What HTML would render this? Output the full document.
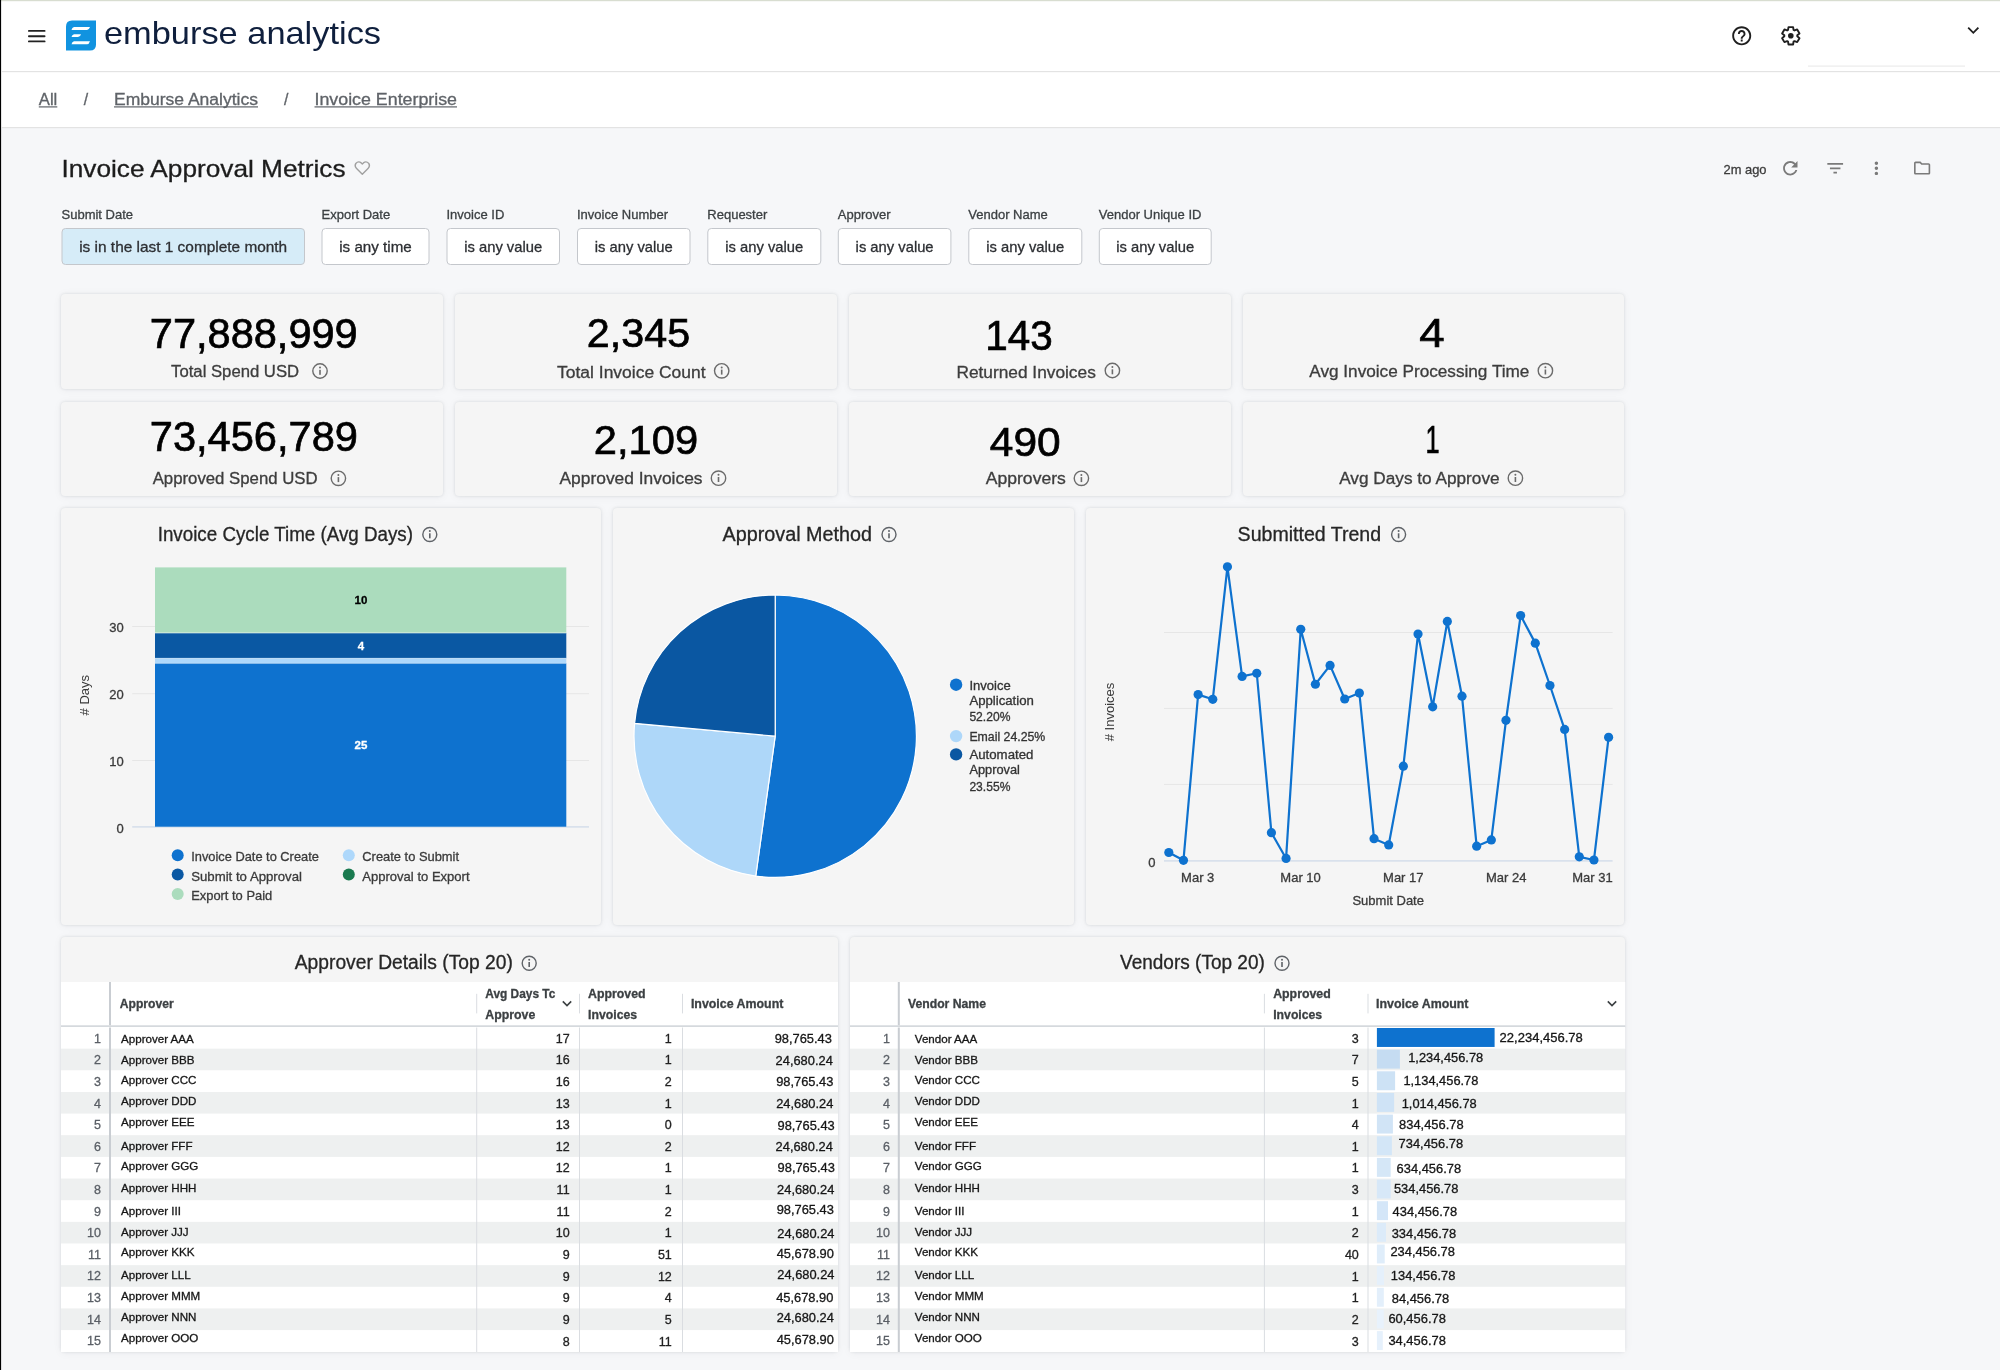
<!DOCTYPE html>
<html><head><meta charset="utf-8">
<style>
html,body{margin:0;padding:0;width:2000px;height:1370px;overflow:hidden;background:#f6f7f9;}
body{position:relative;font-family:"Liberation Sans", sans-serif;}
.hdr{position:absolute;left:0;top:0;width:2000px;height:127px;background:#ffffff;}
.card{position:absolute;box-shadow:0 0 3px rgba(20,30,45,0.12),0 1px 10px rgba(30,40,60,0.05);}
svg{position:absolute;left:0;top:0;will-change:transform;-webkit-font-smoothing:antialiased;}
svg text{font-family:"Liberation Sans", sans-serif;}
</style></head><body>
<div class="hdr"></div>
<div class="card" style="left:61px;top:294px;width:381.5px;height:95.19999999999999px;background:#f5f5f5;border-radius:4px"></div><div class="card" style="left:455px;top:294px;width:381.5px;height:95.19999999999999px;background:#f5f5f5;border-radius:4px"></div><div class="card" style="left:849px;top:294px;width:381.5px;height:95.19999999999999px;background:#f5f5f5;border-radius:4px"></div><div class="card" style="left:1243px;top:294px;width:381.29999999999995px;height:95.19999999999999px;background:#f5f5f5;border-radius:4px"></div><div class="card" style="left:61px;top:401.8px;width:381.5px;height:94.0px;background:#f5f5f5;border-radius:4px"></div><div class="card" style="left:455px;top:401.8px;width:381.5px;height:94.0px;background:#f5f5f5;border-radius:4px"></div><div class="card" style="left:849px;top:401.8px;width:381.5px;height:94.0px;background:#f5f5f5;border-radius:4px"></div><div class="card" style="left:1243px;top:401.8px;width:381.29999999999995px;height:94.0px;background:#f5f5f5;border-radius:4px"></div><div class="card" style="left:61px;top:508px;width:540px;height:417px;background:#f5f5f5;border-radius:4px"></div><div class="card" style="left:613px;top:508px;width:460.5999999999999px;height:417px;background:#f5f5f5;border-radius:4px"></div><div class="card" style="left:1086px;top:508px;width:538.3px;height:417px;background:#f5f5f5;border-radius:4px"></div><div class="card" style="left:61px;top:937px;width:777px;height:415.4000000000001px;background:#f5f5f5;border-radius:4px"></div><div class="card" style="left:850px;top:937px;width:775.2px;height:415.4000000000001px;background:#f5f5f5;border-radius:4px"></div>
<svg width="2000" height="1370" viewBox="0 0 2000 1370">
<rect x="0.00" y="0.00" width="2000.00" height="1.20" fill="#d8ddd0"/>
<rect x="0.00" y="0.00" width="1.10" height="1370.00" fill="#000"/>
<rect x="1.50" y="71.00" width="1998.50" height="1.20" fill="#e3e3e3"/>
<rect x="1.50" y="127.00" width="1998.50" height="1.20" fill="#e3e3e3"/>
<rect x="28" y="29.9" width="17.5" height="1.9" rx="0.9" fill="#222"/>
<rect x="28" y="35.3" width="17.5" height="1.9" rx="0.9" fill="#222"/>
<rect x="28" y="40.4" width="17.5" height="1.9" rx="0.9" fill="#222"/>
<path d="M72,20.5 H96 V44.5 Q96,50.5 90,50.5 H66 V26.5 Q66,20.5 72,20.5 Z" fill="#1193e0"/>
<path d="M74,27 L90,27 Q89,30 87,30 L71.5,30 Q72,27.5 74,27 Z" fill="#fff"/>
<path d="M74,34.2 L81,34.2 Q80.3,37 78,37 L71.5,37 Q72,34.6 74,34.2 Z" fill="#fff"/>
<path d="M74,41.2 L90,41.2 Q89,44.2 87,44.2 L71.5,44.2 Q72,41.6 74,41.2 Z" fill="#fff"/>
<text x="104.0" y="44.0" font-size="32" fill="#0f1f3d" text-anchor="start" textLength="277.0" lengthAdjust="spacingAndGlyphs">emburse analytics</text>
<path transform="translate(1730.3,24.4) scale(0.95)" d="M11 18h2v-2h-2v2zm1-16C6.48 2 2 6.48 2 12s4.48 10 10 10 10-4.48 10-10S17.52 2 12 2zm0 18c-4.41 0-8-3.59-8-8s3.59-8 8-8 8 3.59 8 8-3.59 8-8 8zm0-14c-2.21 0-4 1.790-4 4h2c0-1.1.9-2 2-2s2 .9 2 2c0 2-3 1.75-3 5h2c0-2.25 3-2.5 3-5 0-2.21-1.79-4-4-4z" fill="#1f1f1f"/>
<path d="M1788.04,29.91 L1788.50,27.10 L1793.10,27.10 L1793.56,29.91 L1794.52,30.47 L1797.18,29.46 L1799.49,33.44 L1797.28,35.24 L1797.28,36.36 L1799.49,38.16 L1797.18,42.14 L1794.52,41.13 L1793.56,41.69 L1793.10,44.50 L1788.50,44.50 L1788.04,41.69 L1787.08,41.13 L1784.42,42.14 L1782.11,38.16 L1784.32,36.36 L1784.32,35.24 L1782.11,33.44 L1784.42,29.46 L1787.08,30.47 Z" fill="none" stroke="#1f1f1f" stroke-width="1.9" stroke-linejoin="round"/>
<circle cx="1790.8" cy="35.8" r="2.8" fill="#1f1f1f"/>
<path d="M1968.2,27.6 L1973.3,32.8 L1978.4,27.6" fill="none" stroke="#1f1f1f" stroke-width="1.8"/>
<rect x="1808.00" y="65.50" width="157.00" height="1.20" fill="#ececec"/>
<text x="38.8" y="105.0" font-size="15.8" fill="#5f6368" stroke="#5f6368" stroke-width="0.3" text-anchor="start" textLength="18.5" lengthAdjust="spacingAndGlyphs">All</text>
<rect x="38.80" y="106.30" width="18.50" height="1.20" fill="#5f6368"/>
<text x="83.8" y="105.0" font-size="15.8" fill="#5f6368" stroke="#5f6368" stroke-width="0.3" text-anchor="start">/</text>
<text x="114.0" y="105.0" font-size="15.8" fill="#5f6368" stroke="#5f6368" stroke-width="0.3" text-anchor="start" textLength="144.0" lengthAdjust="spacingAndGlyphs">Emburse Analytics</text>
<rect x="114.00" y="106.30" width="144.00" height="1.20" fill="#5f6368"/>
<text x="284.0" y="105.0" font-size="15.8" fill="#5f6368" stroke="#5f6368" stroke-width="0.3" text-anchor="start">/</text>
<text x="314.5" y="105.0" font-size="15.8" fill="#5f6368" stroke="#5f6368" stroke-width="0.3" text-anchor="start" textLength="142.5" lengthAdjust="spacingAndGlyphs">Invoice Enterprise</text>
<rect x="314.50" y="106.30" width="142.50" height="1.20" fill="#5f6368"/>
<text x="61.5" y="177.0" font-size="24" fill="#1c1c1c" stroke="#1c1c1c" stroke-width="0.3" text-anchor="start" textLength="284.0" lengthAdjust="spacingAndGlyphs">Invoice Approval Metrics</text>
<path d="M362.3,174.3 L356.6,168.6 Q354.2,166 355.8,163.4 Q358.4,160.6 361.2,162.9 L362.3,163.9 L363.4,162.9 Q366.2,160.6 368.8,163.4 Q370.4,166 368,168.6 Z" fill="none" stroke="#a0a0a0" stroke-width="1.4" stroke-linejoin="round"/>
<text x="1723.5" y="173.6" font-size="13" fill="#3c3c3c" stroke="#3c3c3c" stroke-width="0.3" text-anchor="start" textLength="43.0" lengthAdjust="spacingAndGlyphs">2m ago</text>
<path transform="translate(1779.5,157.5) scale(0.9)" d="M17.65 6.35C16.2 4.9 14.21 4 12 4c-4.42 0-7.99 3.58-7.99 8s3.57 8 7.99 8c3.73 0 6.84-2.55 7.73-6h-2.08c-.82 2.33-3.04 4-5.65 4-3.31 0-6-2.69-6-6s2.69-6 6-6c1.66 0 3.14.69 4.22 1.78L13 11h7V4l-2.35 2.35z" fill="#7a7a7a"/>
<path transform="translate(1824.7,157.8) scale(0.875)" d="M10 18h4v-2h-4v2zM3 6v2h18V6H3zm3 7h12v-2H6v2z" fill="#7a7a7a"/>
<path transform="translate(1866.2,158.1) scale(0.85)" d="M12 8c1.1 0 2-.9 2-2s-.9-2-2-2-2 .9-2 2 .9 2 2 2zm0 2c-1.1 0-2 .9-2 2s.9 2 2 2 2-.9 2-2-.9-2-2-2zm0 6c-1.1 0-2 .9-2 2s.9 2 2 2 2-.9 2-2-.9-2-2-2z" fill="#7a7a7a"/>
<path transform="translate(1912.4,158.3) scale(0.81)" d="M9.17 6l2 2H20v10H4V6h5.17M10 4H4c-1.1 0-1.99.9-1.99 2L2 18c0 1.1.9 2 2 2h16c1.1 0 2-.9 2-2V8c0-1.1-.9-2-2-2h-8l-2-2z" fill="#7a7a7a"/>
<text x="61.5" y="219.0" font-size="13" fill="#3c4043" stroke="#3c4043" stroke-width="0.3" text-anchor="start">Submit Date</text>
<rect x="62.0" y="228.5" width="242.5" height="36" rx="3.5" fill="#d6ecf8" stroke="#c4c7cc" stroke-width="1"/>
<text x="183.2" y="251.5" font-size="15" fill="#2d2f33" stroke="#2d2f33" stroke-width="0.3" text-anchor="middle" textLength="208.0" lengthAdjust="spacingAndGlyphs">is in the last 1 complete month</text>
<text x="321.5" y="219.0" font-size="13" fill="#3c4043" stroke="#3c4043" stroke-width="0.3" text-anchor="start">Export Date</text>
<rect x="322.0" y="228.5" width="107.0" height="36" rx="3.5" fill="#ffffff" stroke="#c4c7cc" stroke-width="1"/>
<text x="375.5" y="251.5" font-size="15" fill="#2d2f33" stroke="#2d2f33" stroke-width="0.3" text-anchor="middle" textLength="72.5" lengthAdjust="spacingAndGlyphs">is any time</text>
<text x="446.5" y="219.0" font-size="13" fill="#3c4043" stroke="#3c4043" stroke-width="0.3" text-anchor="start">Invoice ID</text>
<rect x="447.0" y="228.5" width="112.5" height="36" rx="3.5" fill="#ffffff" stroke="#c4c7cc" stroke-width="1"/>
<text x="503.2" y="251.5" font-size="15" fill="#2d2f33" stroke="#2d2f33" stroke-width="0.3" text-anchor="middle" textLength="78.0" lengthAdjust="spacingAndGlyphs">is any value</text>
<text x="577.0" y="219.0" font-size="13" fill="#3c4043" stroke="#3c4043" stroke-width="0.3" text-anchor="start">Invoice Number</text>
<rect x="577.5" y="228.5" width="112.5" height="36" rx="3.5" fill="#ffffff" stroke="#c4c7cc" stroke-width="1"/>
<text x="633.8" y="251.5" font-size="15" fill="#2d2f33" stroke="#2d2f33" stroke-width="0.3" text-anchor="middle" textLength="78.0" lengthAdjust="spacingAndGlyphs">is any value</text>
<text x="707.3" y="219.0" font-size="13" fill="#3c4043" stroke="#3c4043" stroke-width="0.3" text-anchor="start">Requester</text>
<rect x="707.8" y="228.5" width="113.0" height="36" rx="3.5" fill="#ffffff" stroke="#c4c7cc" stroke-width="1"/>
<text x="764.3" y="251.5" font-size="15" fill="#2d2f33" stroke="#2d2f33" stroke-width="0.3" text-anchor="middle" textLength="78.0" lengthAdjust="spacingAndGlyphs">is any value</text>
<text x="837.8" y="219.0" font-size="13" fill="#3c4043" stroke="#3c4043" stroke-width="0.3" text-anchor="start">Approver</text>
<rect x="838.3" y="228.5" width="112.6" height="36" rx="3.5" fill="#ffffff" stroke="#c4c7cc" stroke-width="1"/>
<text x="894.6" y="251.5" font-size="15" fill="#2d2f33" stroke="#2d2f33" stroke-width="0.3" text-anchor="middle" textLength="78.0" lengthAdjust="spacingAndGlyphs">is any value</text>
<text x="968.3" y="219.0" font-size="13" fill="#3c4043" stroke="#3c4043" stroke-width="0.3" text-anchor="start">Vendor Name</text>
<rect x="968.8" y="228.5" width="113.0" height="36" rx="3.5" fill="#ffffff" stroke="#c4c7cc" stroke-width="1"/>
<text x="1025.3" y="251.5" font-size="15" fill="#2d2f33" stroke="#2d2f33" stroke-width="0.3" text-anchor="middle" textLength="78.0" lengthAdjust="spacingAndGlyphs">is any value</text>
<text x="1098.8" y="219.0" font-size="13" fill="#3c4043" stroke="#3c4043" stroke-width="0.3" text-anchor="start">Vendor Unique ID</text>
<rect x="1099.3" y="228.5" width="111.9" height="36" rx="3.5" fill="#ffffff" stroke="#c4c7cc" stroke-width="1"/>
<text x="1155.2" y="251.5" font-size="15" fill="#2d2f33" stroke="#2d2f33" stroke-width="0.3" text-anchor="middle" textLength="78.0" lengthAdjust="spacingAndGlyphs">is any value</text>
<text x="149.8" y="348.4" font-size="42.0" fill="#000000" stroke="#000000" stroke-width="0.7" text-anchor="start" textLength="207.9" lengthAdjust="spacingAndGlyphs">77,888,999</text>
<text x="171.1" y="377.4" font-size="16" fill="#3d3d3d" stroke="#3d3d3d" stroke-width="0.3" text-anchor="start" textLength="128.0" lengthAdjust="spacingAndGlyphs">Total Spend USD</text>
<circle cx="320.0" cy="371.0" r="7.2" fill="none" stroke="#6b6b6b" stroke-width="1.4"/>
<rect x="319.2" y="369.8" width="1.6" height="5" fill="#6b6b6b"/>
<circle cx="320.0" cy="367.6" r="1" fill="#6b6b6b"/>
<text x="586.8" y="346.5" font-size="41.0" fill="#000000" stroke="#000000" stroke-width="0.7" text-anchor="start" textLength="103.4" lengthAdjust="spacingAndGlyphs">2,345</text>
<text x="557.1" y="377.6" font-size="16" fill="#3d3d3d" stroke="#3d3d3d" stroke-width="0.3" text-anchor="start" textLength="148.4" lengthAdjust="spacingAndGlyphs">Total Invoice Count</text>
<circle cx="721.7" cy="370.8" r="7.2" fill="none" stroke="#6b6b6b" stroke-width="1.4"/>
<rect x="720.9" y="369.6" width="1.6" height="5" fill="#6b6b6b"/>
<circle cx="721.7" cy="367.4" r="1" fill="#6b6b6b"/>
<text x="985.3" y="349.8" font-size="42.1" fill="#000000" stroke="#000000" stroke-width="0.7" text-anchor="start" textLength="67.5" lengthAdjust="spacingAndGlyphs">143</text>
<text x="956.4" y="377.6" font-size="16" fill="#3d3d3d" stroke="#3d3d3d" stroke-width="0.3" text-anchor="start" textLength="139.4" lengthAdjust="spacingAndGlyphs">Returned Invoices</text>
<circle cx="1112.4" cy="370.5" r="7.2" fill="none" stroke="#6b6b6b" stroke-width="1.4"/>
<rect x="1111.6" y="369.3" width="1.6" height="5" fill="#6b6b6b"/>
<circle cx="1112.4" cy="367.1" r="1" fill="#6b6b6b"/>
<text x="1419.2" y="346.6" font-size="41.5" fill="#000000" stroke="#000000" stroke-width="0.7" text-anchor="start" textLength="25.4" lengthAdjust="spacingAndGlyphs">4</text>
<text x="1309.3" y="377.2" font-size="16" fill="#3d3d3d" stroke="#3d3d3d" stroke-width="0.3" text-anchor="start" textLength="220.1" lengthAdjust="spacingAndGlyphs">Avg Invoice Processing Time</text>
<circle cx="1545.4" cy="370.7" r="7.2" fill="none" stroke="#6b6b6b" stroke-width="1.4"/>
<rect x="1544.6" y="369.5" width="1.6" height="5" fill="#6b6b6b"/>
<circle cx="1545.4" cy="367.3" r="1" fill="#6b6b6b"/>
<text x="149.8" y="450.7" font-size="42.0" fill="#000000" stroke="#000000" stroke-width="0.7" text-anchor="start" textLength="208.1" lengthAdjust="spacingAndGlyphs">73,456,789</text>
<text x="152.7" y="483.8" font-size="16" fill="#3d3d3d" stroke="#3d3d3d" stroke-width="0.3" text-anchor="start" textLength="164.9" lengthAdjust="spacingAndGlyphs">Approved Spend USD</text>
<circle cx="338.4" cy="478.3" r="7.2" fill="none" stroke="#6b6b6b" stroke-width="1.4"/>
<rect x="337.6" y="477.1" width="1.6" height="5" fill="#6b6b6b"/>
<circle cx="338.4" cy="474.9" r="1" fill="#6b6b6b"/>
<text x="593.8" y="453.7" font-size="41.5" fill="#000000" stroke="#000000" stroke-width="0.7" text-anchor="start" textLength="104.3" lengthAdjust="spacingAndGlyphs">2,109</text>
<text x="559.5" y="484.0" font-size="16" fill="#3d3d3d" stroke="#3d3d3d" stroke-width="0.3" text-anchor="start" textLength="143.0" lengthAdjust="spacingAndGlyphs">Approved Invoices</text>
<circle cx="718.5" cy="478.2" r="7.2" fill="none" stroke="#6b6b6b" stroke-width="1.4"/>
<rect x="717.7" y="477.0" width="1.6" height="5" fill="#6b6b6b"/>
<circle cx="718.5" cy="474.8" r="1" fill="#6b6b6b"/>
<text x="989.8" y="456.3" font-size="41.0" fill="#000000" stroke="#000000" stroke-width="0.7" text-anchor="start" textLength="70.9" lengthAdjust="spacingAndGlyphs">490</text>
<text x="985.8" y="483.8" font-size="16" fill="#3d3d3d" stroke="#3d3d3d" stroke-width="0.3" text-anchor="start" textLength="80.0" lengthAdjust="spacingAndGlyphs">Approvers</text>
<circle cx="1081.4" cy="478.3" r="7.2" fill="none" stroke="#6b6b6b" stroke-width="1.4"/>
<rect x="1080.6" y="477.1" width="1.6" height="5" fill="#6b6b6b"/>
<circle cx="1081.4" cy="474.9" r="1" fill="#6b6b6b"/>
<text x="1425.6" y="453.0" font-size="39.1" fill="#000000" stroke="#000000" stroke-width="0.7" text-anchor="start" textLength="14.1" lengthAdjust="spacingAndGlyphs">1</text>
<text x="1339.2" y="483.8" font-size="16" fill="#3d3d3d" stroke="#3d3d3d" stroke-width="0.3" text-anchor="start" textLength="160.4" lengthAdjust="spacingAndGlyphs">Avg Days to Approve</text>
<circle cx="1515.4" cy="478.2" r="7.2" fill="none" stroke="#6b6b6b" stroke-width="1.4"/>
<rect x="1514.6" y="477.0" width="1.6" height="5" fill="#6b6b6b"/>
<circle cx="1515.4" cy="474.8" r="1" fill="#6b6b6b"/>
<text x="157.7" y="540.8" font-size="19.5" fill="#262626" stroke="#262626" stroke-width="0.3" text-anchor="start" textLength="255.3" lengthAdjust="spacingAndGlyphs">Invoice Cycle Time (Avg Days)</text>
<circle cx="429.8" cy="534.5" r="7" fill="none" stroke="#5f6368" stroke-width="1.4"/>
<rect x="429.0" y="533.3" width="1.6" height="5" fill="#5f6368"/>
<circle cx="429.8" cy="531.1" r="1" fill="#5f6368"/>
<rect x="132.20" y="626.00" width="456.80" height="1.00" fill="#e6e6e6"/>
<text x="123.8" y="631.8" font-size="13" fill="#3a3a3a" stroke="#3a3a3a" stroke-width="0.3" text-anchor="end">30</text>
<rect x="132.20" y="693.20" width="456.80" height="1.00" fill="#e6e6e6"/>
<text x="123.8" y="699.0" font-size="13" fill="#3a3a3a" stroke="#3a3a3a" stroke-width="0.3" text-anchor="end">20</text>
<rect x="132.20" y="760.00" width="456.80" height="1.00" fill="#e6e6e6"/>
<text x="123.8" y="765.8" font-size="13" fill="#3a3a3a" stroke="#3a3a3a" stroke-width="0.3" text-anchor="end">10</text>
<rect x="132.20" y="826.20" width="456.80" height="1.40" fill="#d3dcea"/>
<text x="123.8" y="832.7" font-size="13" fill="#3a3a3a" stroke="#3a3a3a" stroke-width="0.3" text-anchor="end">0</text>
<text transform="translate(89,695.2) rotate(-90)" x="0" y="0" font-size="13" fill="#3a3a3a" text-anchor="middle">#&#160;Days</text>
<rect x="155.00" y="567.40" width="411.30" height="65.50" fill="#abdcbd"/>
<rect x="155.00" y="633.00" width="411.30" height="25.20" fill="#0a58a3"/>
<rect x="155.00" y="658.20" width="411.30" height="5.00" fill="#aed8fb"/>
<rect x="155.00" y="663.20" width="411.30" height="163.50" fill="#0e72cf"/>
<rect x="155.00" y="632.60" width="411.30" height="0.70" fill="#e9f3ee"/>
<rect x="155.00" y="657.90" width="411.30" height="0.60" fill="#c9dff3"/>
<rect x="155.00" y="662.90" width="411.30" height="0.60" fill="#d6eafb"/>
<text x="361.0" y="604.3" font-size="11.5" fill="#000" font-weight="700" stroke="#000" stroke-width="0.3" text-anchor="middle">10</text>
<text x="361.0" y="650.1" font-size="11.5" fill="#fff" font-weight="700" stroke="#fff" stroke-width="0.3" text-anchor="middle">4</text>
<text x="361.0" y="748.5" font-size="11.5" fill="#fff" font-weight="700" stroke="#fff" stroke-width="0.3" text-anchor="middle">25</text>
<circle cx="177.7" cy="855.3" r="6" fill="#0e72cf"/>
<text x="191.2" y="861.0" font-size="13" fill="#3a3a3a" stroke="#3a3a3a" stroke-width="0.3" text-anchor="start" textLength="127.7" lengthAdjust="spacingAndGlyphs">Invoice Date to Create</text>
<circle cx="348.8" cy="855.3" r="6" fill="#aed8fb"/>
<text x="362.3" y="861.0" font-size="13" fill="#3a3a3a" stroke="#3a3a3a" stroke-width="0.3" text-anchor="start" textLength="96.7" lengthAdjust="spacingAndGlyphs">Create to Submit</text>
<circle cx="177.7" cy="874.5" r="6" fill="#0a58a3"/>
<text x="191.2" y="880.6" font-size="13" fill="#3a3a3a" stroke="#3a3a3a" stroke-width="0.3" text-anchor="start" textLength="110.8" lengthAdjust="spacingAndGlyphs">Submit to Approval</text>
<circle cx="348.8" cy="874.5" r="6" fill="#1a7a4f"/>
<text x="362.3" y="880.6" font-size="13" fill="#3a3a3a" stroke="#3a3a3a" stroke-width="0.3" text-anchor="start" textLength="107.3" lengthAdjust="spacingAndGlyphs">Approval to Export</text>
<circle cx="177.7" cy="893.9" r="6" fill="#abdcbd"/>
<text x="191.2" y="900.0" font-size="13" fill="#3a3a3a" stroke="#3a3a3a" stroke-width="0.3" text-anchor="start" textLength="81.0" lengthAdjust="spacingAndGlyphs">Export to Paid</text>
<text x="722.5" y="540.8" font-size="19.5" fill="#262626" stroke="#262626" stroke-width="0.3" text-anchor="start" textLength="149.5" lengthAdjust="spacingAndGlyphs">Approval Method</text>
<circle cx="889.0" cy="534.5" r="7" fill="none" stroke="#5f6368" stroke-width="1.4"/>
<rect x="888.2" y="533.3" width="1.6" height="5" fill="#5f6368"/>
<circle cx="889.0" cy="531.1" r="1" fill="#5f6368"/>
<path d="M775.2,736.2 L775.20,595.00 A141.2,141.2 0 1 1 755.74,876.05 Z" fill="#0e72cf" stroke="#ffffff" stroke-width="1.2" stroke-linejoin="round"/>
<path d="M775.2,736.2 L755.74,876.05 A141.2,141.2 0 0 1 634.59,723.35 Z" fill="#aed7f9" stroke="#ffffff" stroke-width="1.2" stroke-linejoin="round"/>
<path d="M775.2,736.2 L634.59,723.35 A141.2,141.2 0 0 1 775.20,595.00 Z" fill="#0a57a2" stroke="#ffffff" stroke-width="1.2" stroke-linejoin="round"/>
<circle cx="956.1" cy="684.7" r="6.2" fill="#0e72cf"/>
<text x="969.4" y="689.9" font-size="12.3" fill="#333" stroke="#333" stroke-width="0.3" text-anchor="start" textLength="41.3" lengthAdjust="spacingAndGlyphs">Invoice</text>
<text x="969.4" y="704.9" font-size="12.3" fill="#333" stroke="#333" stroke-width="0.3" text-anchor="start" textLength="64.5" lengthAdjust="spacingAndGlyphs">Application</text>
<text x="969.4" y="720.8" font-size="12.3" fill="#333" stroke="#333" stroke-width="0.3" text-anchor="start" textLength="41.0" lengthAdjust="spacingAndGlyphs">52.20%</text>
<circle cx="956.1" cy="736.1" r="6.2" fill="#aed7f9"/>
<text x="969.4" y="740.7" font-size="12.3" fill="#333" stroke="#333" stroke-width="0.3" text-anchor="start" textLength="75.9" lengthAdjust="spacingAndGlyphs">Email 24.25%</text>
<circle cx="956.1" cy="754.4" r="6.2" fill="#0a57a2"/>
<text x="969.4" y="759.4" font-size="12.3" fill="#333" stroke="#333" stroke-width="0.3" text-anchor="start" textLength="64.0" lengthAdjust="spacingAndGlyphs">Automated</text>
<text x="969.4" y="774.4" font-size="12.3" fill="#333" stroke="#333" stroke-width="0.3" text-anchor="start" textLength="50.5" lengthAdjust="spacingAndGlyphs">Approval</text>
<text x="969.4" y="790.7" font-size="12.3" fill="#333" stroke="#333" stroke-width="0.3" text-anchor="start" textLength="41.0" lengthAdjust="spacingAndGlyphs">23.55%</text>
<text x="1237.6" y="540.8" font-size="19.5" fill="#262626" stroke="#262626" stroke-width="0.3" text-anchor="start" textLength="143.5" lengthAdjust="spacingAndGlyphs">Submitted Trend</text>
<circle cx="1398.6" cy="534.5" r="7" fill="none" stroke="#5f6368" stroke-width="1.4"/>
<rect x="1397.8" y="533.3" width="1.6" height="5" fill="#5f6368"/>
<circle cx="1398.6" cy="531.1" r="1" fill="#5f6368"/>
<rect x="1164.00" y="632.00" width="448.60" height="1.00" fill="#e6e6e6"/>
<rect x="1164.00" y="707.90" width="448.60" height="1.00" fill="#e6e6e6"/>
<rect x="1164.00" y="783.90" width="448.60" height="1.00" fill="#e6e6e6"/>
<rect x="1164.00" y="860.20" width="448.60" height="1.40" fill="#d3dcea"/>
<text x="1155.5" y="866.5" font-size="13" fill="#3a3a3a" stroke="#3a3a3a" stroke-width="0.3" text-anchor="end">0</text>
<text transform="translate(1114,712) rotate(-90)" x="0" y="0" font-size="13" fill="#3a3a3a" text-anchor="middle">#&#160;Invoices</text>
<text x="1197.7" y="882.0" font-size="13" fill="#3a3a3a" stroke="#3a3a3a" stroke-width="0.3" text-anchor="middle">Mar 3</text>
<text x="1300.6" y="882.0" font-size="13" fill="#3a3a3a" stroke="#3a3a3a" stroke-width="0.3" text-anchor="middle">Mar 10</text>
<text x="1403.3" y="882.0" font-size="13" fill="#3a3a3a" stroke="#3a3a3a" stroke-width="0.3" text-anchor="middle">Mar 17</text>
<text x="1506.2" y="882.0" font-size="13" fill="#3a3a3a" stroke="#3a3a3a" stroke-width="0.3" text-anchor="middle">Mar 24</text>
<text x="1592.5" y="882.0" font-size="13" fill="#3a3a3a" stroke="#3a3a3a" stroke-width="0.3" text-anchor="middle">Mar 31</text>
<text x="1388.2" y="905.0" font-size="13" fill="#3a3a3a" stroke="#3a3a3a" stroke-width="0.3" text-anchor="middle">Submit Date</text>
<path d="M1168.80,852.48 L1183.46,860.33 L1198.12,694.60 L1212.78,699.31 L1227.44,566.85 L1242.10,676.40 L1256.76,673.26 L1271.42,832.71 L1286.08,858.44 L1300.74,629.32 L1315.40,684.24 L1330.06,665.41 L1344.72,699.00 L1359.38,693.03 L1374.04,838.67 L1388.70,844.95 L1403.36,766.16 L1418.02,634.02 L1432.68,706.84 L1447.34,621.47 L1462.00,696.17 L1476.66,846.20 L1491.32,839.92 L1505.98,720.34 L1520.64,615.51 L1535.30,643.13 L1549.96,685.50 L1564.62,729.44 L1579.28,856.87 L1593.94,860.01 L1608.60,737.29" fill="none" stroke="#0e72cf" stroke-width="2.2" stroke-linejoin="round"/>
<circle cx="1168.80" cy="852.48" r="4.6" fill="#0e72cf"/>
<circle cx="1183.46" cy="860.33" r="4.6" fill="#0e72cf"/>
<circle cx="1198.12" cy="694.60" r="4.6" fill="#0e72cf"/>
<circle cx="1212.78" cy="699.31" r="4.6" fill="#0e72cf"/>
<circle cx="1227.44" cy="566.85" r="4.6" fill="#0e72cf"/>
<circle cx="1242.10" cy="676.40" r="4.6" fill="#0e72cf"/>
<circle cx="1256.76" cy="673.26" r="4.6" fill="#0e72cf"/>
<circle cx="1271.42" cy="832.71" r="4.6" fill="#0e72cf"/>
<circle cx="1286.08" cy="858.44" r="4.6" fill="#0e72cf"/>
<circle cx="1300.74" cy="629.32" r="4.6" fill="#0e72cf"/>
<circle cx="1315.40" cy="684.24" r="4.6" fill="#0e72cf"/>
<circle cx="1330.06" cy="665.41" r="4.6" fill="#0e72cf"/>
<circle cx="1344.72" cy="699.00" r="4.6" fill="#0e72cf"/>
<circle cx="1359.38" cy="693.03" r="4.6" fill="#0e72cf"/>
<circle cx="1374.04" cy="838.67" r="4.6" fill="#0e72cf"/>
<circle cx="1388.70" cy="844.95" r="4.6" fill="#0e72cf"/>
<circle cx="1403.36" cy="766.16" r="4.6" fill="#0e72cf"/>
<circle cx="1418.02" cy="634.02" r="4.6" fill="#0e72cf"/>
<circle cx="1432.68" cy="706.84" r="4.6" fill="#0e72cf"/>
<circle cx="1447.34" cy="621.47" r="4.6" fill="#0e72cf"/>
<circle cx="1462.00" cy="696.17" r="4.6" fill="#0e72cf"/>
<circle cx="1476.66" cy="846.20" r="4.6" fill="#0e72cf"/>
<circle cx="1491.32" cy="839.92" r="4.6" fill="#0e72cf"/>
<circle cx="1505.98" cy="720.34" r="4.6" fill="#0e72cf"/>
<circle cx="1520.64" cy="615.51" r="4.6" fill="#0e72cf"/>
<circle cx="1535.30" cy="643.13" r="4.6" fill="#0e72cf"/>
<circle cx="1549.96" cy="685.50" r="4.6" fill="#0e72cf"/>
<circle cx="1564.62" cy="729.44" r="4.6" fill="#0e72cf"/>
<circle cx="1579.28" cy="856.87" r="4.6" fill="#0e72cf"/>
<circle cx="1593.94" cy="860.01" r="4.6" fill="#0e72cf"/>
<circle cx="1608.60" cy="737.29" r="4.6" fill="#0e72cf"/>
<text x="294.8" y="968.8" font-size="19.5" fill="#262626" stroke="#262626" stroke-width="0.3" text-anchor="start" textLength="218.0" lengthAdjust="spacingAndGlyphs">Approver Details (Top 20)</text>
<circle cx="529.2" cy="963.2" r="7" fill="none" stroke="#5f6368" stroke-width="1.4"/>
<rect x="528.4" y="962.0" width="1.6" height="5" fill="#5f6368"/>
<circle cx="529.2" cy="959.8" r="1" fill="#5f6368"/>
<rect x="61.00" y="982.00" width="777.00" height="43.60" fill="#ffffff"/>
<rect x="61.00" y="1025.30" width="777.00" height="2.20" fill="#d5d9dd"/>
<rect x="61.00" y="1027.00" width="777.00" height="21.95" fill="#ffffff"/>
<rect x="61.00" y="1048.65" width="777.00" height="21.95" fill="#eef0f0"/>
<rect x="61.00" y="1070.30" width="777.00" height="21.95" fill="#ffffff"/>
<rect x="61.00" y="1091.95" width="777.00" height="21.95" fill="#eef0f0"/>
<rect x="61.00" y="1113.60" width="777.00" height="21.95" fill="#ffffff"/>
<rect x="61.00" y="1135.25" width="777.00" height="21.95" fill="#eef0f0"/>
<rect x="61.00" y="1156.90" width="777.00" height="21.95" fill="#ffffff"/>
<rect x="61.00" y="1178.55" width="777.00" height="21.95" fill="#eef0f0"/>
<rect x="61.00" y="1200.20" width="777.00" height="21.95" fill="#ffffff"/>
<rect x="61.00" y="1221.85" width="777.00" height="21.95" fill="#eef0f0"/>
<rect x="61.00" y="1243.50" width="777.00" height="21.95" fill="#ffffff"/>
<rect x="61.00" y="1265.15" width="777.00" height="21.95" fill="#eef0f0"/>
<rect x="61.00" y="1286.80" width="777.00" height="21.95" fill="#ffffff"/>
<rect x="61.00" y="1308.45" width="777.00" height="21.95" fill="#eef0f0"/>
<rect x="61.00" y="1330.10" width="777.00" height="21.95" fill="#ffffff"/>
<rect x="109.00" y="1027.50" width="2.00" height="324.50" fill="#c9cdd2"/>
<rect x="109.00" y="982.00" width="2.00" height="43.30" fill="#c9cdd2"/>
<rect x="476.20" y="1027.50" width="1.00" height="324.50" fill="#dadde1"/>
<rect x="476.20" y="993.80" width="1.00" height="19.60" fill="#dadde1"/>
<rect x="579.00" y="1027.50" width="1.00" height="324.50" fill="#dadde1"/>
<rect x="579.00" y="993.80" width="1.00" height="19.60" fill="#dadde1"/>
<rect x="682.00" y="1027.50" width="1.00" height="324.50" fill="#dadde1"/>
<rect x="682.00" y="993.80" width="1.00" height="19.60" fill="#dadde1"/>
<text x="119.7" y="1008.2" font-size="12.3" fill="#3c4043" font-weight="700" stroke="#3c4043" stroke-width="0.3" text-anchor="start" textLength="54.0" lengthAdjust="spacingAndGlyphs">Approver</text>
<text x="485.3" y="997.5" font-size="12.3" fill="#3c4043" font-weight="700" stroke="#3c4043" stroke-width="0.3" text-anchor="start" textLength="70.0" lengthAdjust="spacingAndGlyphs">Avg Days Tc</text>
<text x="485.3" y="1018.5" font-size="12.3" fill="#3c4043" font-weight="700" stroke="#3c4043" stroke-width="0.3" text-anchor="start" textLength="50.0" lengthAdjust="spacingAndGlyphs">Approve</text>
<path d="M562.8,1001.4 L567,1005.6 L571.2,1001.4" fill="none" stroke="#3c4043" stroke-width="1.6"/>
<text x="588.1" y="997.5" font-size="12.3" fill="#3c4043" font-weight="700" stroke="#3c4043" stroke-width="0.3" text-anchor="start" textLength="57.5" lengthAdjust="spacingAndGlyphs">Approved</text>
<text x="588.1" y="1018.5" font-size="12.3" fill="#3c4043" font-weight="700" stroke="#3c4043" stroke-width="0.3" text-anchor="start" textLength="49.0" lengthAdjust="spacingAndGlyphs">Invoices</text>
<text x="690.9" y="1008.4" font-size="12.3" fill="#3c4043" font-weight="700" stroke="#3c4043" stroke-width="0.3" text-anchor="start" textLength="92.5" lengthAdjust="spacingAndGlyphs">Invoice Amount</text>
<text x="101.0" y="1042.8" font-size="12.5" fill="#5a5f66" stroke="#5a5f66" stroke-width="0.3" text-anchor="end">1</text>
<text x="121.0" y="1043.2" font-size="11.6" fill="#161616" stroke="#161616" stroke-width="0.3" text-anchor="start">Approver AAA</text>
<text x="569.6" y="1042.5" font-size="12.5" fill="#222" stroke="#222" stroke-width="0.3" text-anchor="end">17</text>
<text x="671.8" y="1042.5" font-size="12.5" fill="#222" stroke="#222" stroke-width="0.3" text-anchor="end">1</text>
<text x="831.9" y="1042.5" font-size="12.5" fill="#161616" stroke="#161616" stroke-width="0.3" text-anchor="end" textLength="57.2" lengthAdjust="spacingAndGlyphs">98,765.43</text>
<text x="101.0" y="1064.4" font-size="12.5" fill="#5a5f66" stroke="#5a5f66" stroke-width="0.3" text-anchor="end">2</text>
<text x="121.0" y="1064.0" font-size="11.6" fill="#161616" stroke="#161616" stroke-width="0.3" text-anchor="start">Approver BBB</text>
<text x="569.6" y="1064.2" font-size="12.5" fill="#222" stroke="#222" stroke-width="0.3" text-anchor="end">16</text>
<text x="671.8" y="1064.2" font-size="12.5" fill="#222" stroke="#222" stroke-width="0.3" text-anchor="end">1</text>
<text x="832.8" y="1064.6" font-size="12.5" fill="#161616" stroke="#161616" stroke-width="0.3" text-anchor="end" textLength="57.2" lengthAdjust="spacingAndGlyphs">24,680.24</text>
<text x="101.0" y="1086.0" font-size="12.5" fill="#5a5f66" stroke="#5a5f66" stroke-width="0.3" text-anchor="end">3</text>
<text x="121.0" y="1084.4" font-size="11.6" fill="#161616" stroke="#161616" stroke-width="0.3" text-anchor="start">Approver CCC</text>
<text x="569.6" y="1085.8" font-size="12.5" fill="#222" stroke="#222" stroke-width="0.3" text-anchor="end">16</text>
<text x="671.8" y="1085.8" font-size="12.5" fill="#222" stroke="#222" stroke-width="0.3" text-anchor="end">2</text>
<text x="833.4" y="1086.2" font-size="12.5" fill="#161616" stroke="#161616" stroke-width="0.3" text-anchor="end" textLength="57.2" lengthAdjust="spacingAndGlyphs">98,765.43</text>
<text x="101.0" y="1107.6" font-size="12.5" fill="#5a5f66" stroke="#5a5f66" stroke-width="0.3" text-anchor="end">4</text>
<text x="121.0" y="1104.8" font-size="11.6" fill="#161616" stroke="#161616" stroke-width="0.3" text-anchor="start">Approver DDD</text>
<text x="569.6" y="1107.5" font-size="12.5" fill="#222" stroke="#222" stroke-width="0.3" text-anchor="end">13</text>
<text x="671.8" y="1107.5" font-size="12.5" fill="#222" stroke="#222" stroke-width="0.3" text-anchor="end">1</text>
<text x="833.4" y="1107.8" font-size="12.5" fill="#161616" stroke="#161616" stroke-width="0.3" text-anchor="end" textLength="57.2" lengthAdjust="spacingAndGlyphs">24,680.24</text>
<text x="101.0" y="1129.2" font-size="12.5" fill="#5a5f66" stroke="#5a5f66" stroke-width="0.3" text-anchor="end">5</text>
<text x="121.0" y="1126.0" font-size="11.6" fill="#161616" stroke="#161616" stroke-width="0.3" text-anchor="start">Approver EEE</text>
<text x="569.6" y="1129.1" font-size="12.5" fill="#222" stroke="#222" stroke-width="0.3" text-anchor="end">13</text>
<text x="671.8" y="1129.1" font-size="12.5" fill="#222" stroke="#222" stroke-width="0.3" text-anchor="end">0</text>
<text x="834.7" y="1129.7" font-size="12.5" fill="#161616" stroke="#161616" stroke-width="0.3" text-anchor="end" textLength="57.2" lengthAdjust="spacingAndGlyphs">98,765.43</text>
<text x="101.0" y="1150.8" font-size="12.5" fill="#5a5f66" stroke="#5a5f66" stroke-width="0.3" text-anchor="end">6</text>
<text x="121.0" y="1150.0" font-size="11.6" fill="#161616" stroke="#161616" stroke-width="0.3" text-anchor="start">Approver FFF</text>
<text x="569.6" y="1150.8" font-size="12.5" fill="#222" stroke="#222" stroke-width="0.3" text-anchor="end">12</text>
<text x="671.8" y="1150.8" font-size="12.5" fill="#222" stroke="#222" stroke-width="0.3" text-anchor="end">2</text>
<text x="832.8" y="1150.5" font-size="12.5" fill="#161616" stroke="#161616" stroke-width="0.3" text-anchor="end" textLength="57.2" lengthAdjust="spacingAndGlyphs">24,680.24</text>
<text x="101.0" y="1172.4" font-size="12.5" fill="#5a5f66" stroke="#5a5f66" stroke-width="0.3" text-anchor="end">7</text>
<text x="121.0" y="1170.0" font-size="11.6" fill="#161616" stroke="#161616" stroke-width="0.3" text-anchor="start">Approver GGG</text>
<text x="569.6" y="1172.4" font-size="12.5" fill="#222" stroke="#222" stroke-width="0.3" text-anchor="end">12</text>
<text x="671.8" y="1172.4" font-size="12.5" fill="#222" stroke="#222" stroke-width="0.3" text-anchor="end">1</text>
<text x="834.8" y="1171.9" font-size="12.5" fill="#161616" stroke="#161616" stroke-width="0.3" text-anchor="end" textLength="57.2" lengthAdjust="spacingAndGlyphs">98,765.43</text>
<text x="101.0" y="1194.0" font-size="12.5" fill="#5a5f66" stroke="#5a5f66" stroke-width="0.3" text-anchor="end">8</text>
<text x="121.0" y="1192.0" font-size="11.6" fill="#161616" stroke="#161616" stroke-width="0.3" text-anchor="start">Approver HHH</text>
<text x="569.6" y="1194.0" font-size="12.5" fill="#222" stroke="#222" stroke-width="0.3" text-anchor="end">11</text>
<text x="671.8" y="1194.0" font-size="12.5" fill="#222" stroke="#222" stroke-width="0.3" text-anchor="end">1</text>
<text x="834.3" y="1194.4" font-size="12.5" fill="#161616" stroke="#161616" stroke-width="0.3" text-anchor="end" textLength="57.2" lengthAdjust="spacingAndGlyphs">24,680.24</text>
<text x="101.0" y="1215.6" font-size="12.5" fill="#5a5f66" stroke="#5a5f66" stroke-width="0.3" text-anchor="end">9</text>
<text x="121.0" y="1215.0" font-size="11.6" fill="#161616" stroke="#161616" stroke-width="0.3" text-anchor="start">Approver III</text>
<text x="569.6" y="1215.7" font-size="12.5" fill="#222" stroke="#222" stroke-width="0.3" text-anchor="end">11</text>
<text x="671.8" y="1215.7" font-size="12.5" fill="#222" stroke="#222" stroke-width="0.3" text-anchor="end">2</text>
<text x="833.9" y="1214.0" font-size="12.5" fill="#161616" stroke="#161616" stroke-width="0.3" text-anchor="end" textLength="57.2" lengthAdjust="spacingAndGlyphs">98,765.43</text>
<text x="101.0" y="1237.2" font-size="12.5" fill="#5a5f66" stroke="#5a5f66" stroke-width="0.3" text-anchor="end">10</text>
<text x="121.0" y="1235.6" font-size="11.6" fill="#161616" stroke="#161616" stroke-width="0.3" text-anchor="start">Approver JJJ</text>
<text x="569.6" y="1237.3" font-size="12.5" fill="#222" stroke="#222" stroke-width="0.3" text-anchor="end">10</text>
<text x="671.8" y="1237.3" font-size="12.5" fill="#222" stroke="#222" stroke-width="0.3" text-anchor="end">1</text>
<text x="834.5" y="1237.6" font-size="12.5" fill="#161616" stroke="#161616" stroke-width="0.3" text-anchor="end" textLength="57.2" lengthAdjust="spacingAndGlyphs">24,680.24</text>
<text x="101.0" y="1258.8" font-size="12.5" fill="#5a5f66" stroke="#5a5f66" stroke-width="0.3" text-anchor="end">11</text>
<text x="121.0" y="1256.4" font-size="11.6" fill="#161616" stroke="#161616" stroke-width="0.3" text-anchor="start">Approver KKK</text>
<text x="569.6" y="1259.0" font-size="12.5" fill="#222" stroke="#222" stroke-width="0.3" text-anchor="end">9</text>
<text x="671.8" y="1259.0" font-size="12.5" fill="#222" stroke="#222" stroke-width="0.3" text-anchor="end">51</text>
<text x="833.9" y="1257.8" font-size="12.5" fill="#161616" stroke="#161616" stroke-width="0.3" text-anchor="end" textLength="57.2" lengthAdjust="spacingAndGlyphs">45,678.90</text>
<text x="101.0" y="1280.4" font-size="12.5" fill="#5a5f66" stroke="#5a5f66" stroke-width="0.3" text-anchor="end">12</text>
<text x="121.0" y="1279.0" font-size="11.6" fill="#161616" stroke="#161616" stroke-width="0.3" text-anchor="start">Approver LLL</text>
<text x="569.6" y="1280.7" font-size="12.5" fill="#222" stroke="#222" stroke-width="0.3" text-anchor="end">9</text>
<text x="671.8" y="1280.7" font-size="12.5" fill="#222" stroke="#222" stroke-width="0.3" text-anchor="end">12</text>
<text x="834.5" y="1279.4" font-size="12.5" fill="#161616" stroke="#161616" stroke-width="0.3" text-anchor="end" textLength="57.2" lengthAdjust="spacingAndGlyphs">24,680.24</text>
<text x="101.0" y="1302.0" font-size="12.5" fill="#5a5f66" stroke="#5a5f66" stroke-width="0.3" text-anchor="end">13</text>
<text x="121.0" y="1300.0" font-size="11.6" fill="#161616" stroke="#161616" stroke-width="0.3" text-anchor="start">Approver MMM</text>
<text x="569.6" y="1302.3" font-size="12.5" fill="#222" stroke="#222" stroke-width="0.3" text-anchor="end">9</text>
<text x="671.8" y="1302.3" font-size="12.5" fill="#222" stroke="#222" stroke-width="0.3" text-anchor="end">4</text>
<text x="833.4" y="1301.6" font-size="12.5" fill="#161616" stroke="#161616" stroke-width="0.3" text-anchor="end" textLength="57.2" lengthAdjust="spacingAndGlyphs">45,678.90</text>
<text x="101.0" y="1323.6" font-size="12.5" fill="#5a5f66" stroke="#5a5f66" stroke-width="0.3" text-anchor="end">14</text>
<text x="121.0" y="1321.0" font-size="11.6" fill="#161616" stroke="#161616" stroke-width="0.3" text-anchor="start">Approver NNN</text>
<text x="569.6" y="1324.0" font-size="12.5" fill="#222" stroke="#222" stroke-width="0.3" text-anchor="end">9</text>
<text x="671.8" y="1324.0" font-size="12.5" fill="#222" stroke="#222" stroke-width="0.3" text-anchor="end">5</text>
<text x="833.9" y="1322.1" font-size="12.5" fill="#161616" stroke="#161616" stroke-width="0.3" text-anchor="end" textLength="57.2" lengthAdjust="spacingAndGlyphs">24,680.24</text>
<text x="101.0" y="1345.2" font-size="12.5" fill="#5a5f66" stroke="#5a5f66" stroke-width="0.3" text-anchor="end">15</text>
<text x="121.0" y="1342.0" font-size="11.6" fill="#161616" stroke="#161616" stroke-width="0.3" text-anchor="start">Approver OOO</text>
<text x="569.6" y="1345.6" font-size="12.5" fill="#222" stroke="#222" stroke-width="0.3" text-anchor="end">8</text>
<text x="671.8" y="1345.6" font-size="12.5" fill="#222" stroke="#222" stroke-width="0.3" text-anchor="end">11</text>
<text x="833.9" y="1343.5" font-size="12.5" fill="#161616" stroke="#161616" stroke-width="0.3" text-anchor="end" textLength="57.2" lengthAdjust="spacingAndGlyphs">45,678.90</text>
<text x="1120.0" y="968.8" font-size="19.5" fill="#262626" stroke="#262626" stroke-width="0.3" text-anchor="start" textLength="144.8" lengthAdjust="spacingAndGlyphs">Vendors (Top 20)</text>
<circle cx="1282.0" cy="963.2" r="7" fill="none" stroke="#5f6368" stroke-width="1.4"/>
<rect x="1281.2" y="962.0" width="1.6" height="5" fill="#5f6368"/>
<circle cx="1282.0" cy="959.8" r="1" fill="#5f6368"/>
<rect x="850.00" y="982.00" width="775.20" height="43.60" fill="#ffffff"/>
<rect x="850.00" y="1025.30" width="775.20" height="2.20" fill="#d5d9dd"/>
<rect x="850.00" y="1027.00" width="775.20" height="21.95" fill="#ffffff"/>
<rect x="850.00" y="1048.65" width="775.20" height="21.95" fill="#eef0f0"/>
<rect x="850.00" y="1070.30" width="775.20" height="21.95" fill="#ffffff"/>
<rect x="850.00" y="1091.95" width="775.20" height="21.95" fill="#eef0f0"/>
<rect x="850.00" y="1113.60" width="775.20" height="21.95" fill="#ffffff"/>
<rect x="850.00" y="1135.25" width="775.20" height="21.95" fill="#eef0f0"/>
<rect x="850.00" y="1156.90" width="775.20" height="21.95" fill="#ffffff"/>
<rect x="850.00" y="1178.55" width="775.20" height="21.95" fill="#eef0f0"/>
<rect x="850.00" y="1200.20" width="775.20" height="21.95" fill="#ffffff"/>
<rect x="850.00" y="1221.85" width="775.20" height="21.95" fill="#eef0f0"/>
<rect x="850.00" y="1243.50" width="775.20" height="21.95" fill="#ffffff"/>
<rect x="850.00" y="1265.15" width="775.20" height="21.95" fill="#eef0f0"/>
<rect x="850.00" y="1286.80" width="775.20" height="21.95" fill="#ffffff"/>
<rect x="850.00" y="1308.45" width="775.20" height="21.95" fill="#eef0f0"/>
<rect x="850.00" y="1330.10" width="775.20" height="21.95" fill="#ffffff"/>
<rect x="897.80" y="1027.50" width="2.00" height="324.50" fill="#c9cdd2"/>
<rect x="897.80" y="982.00" width="2.00" height="43.30" fill="#c9cdd2"/>
<rect x="1263.90" y="1027.50" width="1.00" height="324.50" fill="#dadde1"/>
<rect x="1263.90" y="993.80" width="1.00" height="19.60" fill="#dadde1"/>
<rect x="1367.50" y="1027.50" width="1.00" height="324.50" fill="#dadde1"/>
<rect x="1367.50" y="993.80" width="1.00" height="19.60" fill="#dadde1"/>
<text x="908.0" y="1008.2" font-size="12.3" fill="#3c4043" font-weight="700" stroke="#3c4043" stroke-width="0.3" text-anchor="start" textLength="78.0" lengthAdjust="spacingAndGlyphs">Vendor Name</text>
<text x="1273.2" y="997.5" font-size="12.3" fill="#3c4043" font-weight="700" stroke="#3c4043" stroke-width="0.3" text-anchor="start" textLength="57.5" lengthAdjust="spacingAndGlyphs">Approved</text>
<text x="1273.2" y="1018.5" font-size="12.3" fill="#3c4043" font-weight="700" stroke="#3c4043" stroke-width="0.3" text-anchor="start" textLength="49.0" lengthAdjust="spacingAndGlyphs">Invoices</text>
<text x="1376.0" y="1008.4" font-size="12.3" fill="#3c4043" font-weight="700" stroke="#3c4043" stroke-width="0.3" text-anchor="start" textLength="92.5" lengthAdjust="spacingAndGlyphs">Invoice Amount</text>
<path d="M1607.8,1001.4 L1612,1005.6 L1616.2,1001.4" fill="none" stroke="#3c4043" stroke-width="1.6"/>
<text x="890.0" y="1042.8" font-size="12.5" fill="#5a5f66" stroke="#5a5f66" stroke-width="0.3" text-anchor="end">1</text>
<text x="914.8" y="1043.2" font-size="11.6" fill="#161616" stroke="#161616" stroke-width="0.3" text-anchor="start">Vendor AAA</text>
<text x="1358.8" y="1042.5" font-size="12.5" fill="#222" stroke="#222" stroke-width="0.3" text-anchor="end">3</text>
<rect x="1376.90" y="1028.00" width="117.70" height="18.95" fill="#0e72cf"/>
<text x="1499.6" y="1041.6" font-size="12.5" fill="#161616" stroke="#161616" stroke-width="0.3" text-anchor="start" textLength="83.2" lengthAdjust="spacingAndGlyphs">22,234,456.78</text>
<text x="890.0" y="1064.4" font-size="12.5" fill="#5a5f66" stroke="#5a5f66" stroke-width="0.3" text-anchor="end">2</text>
<text x="914.8" y="1064.0" font-size="11.6" fill="#161616" stroke="#161616" stroke-width="0.3" text-anchor="start">Vendor BBB</text>
<text x="1358.8" y="1064.2" font-size="12.5" fill="#222" stroke="#222" stroke-width="0.3" text-anchor="end">7</text>
<rect x="1376.90" y="1049.65" width="23.00" height="18.95" fill="#c5dcf2"/>
<text x="1408.2" y="1062.0" font-size="12.5" fill="#161616" stroke="#161616" stroke-width="0.3" text-anchor="start" textLength="75.0" lengthAdjust="spacingAndGlyphs">1,234,456.78</text>
<text x="890.0" y="1086.0" font-size="12.5" fill="#5a5f66" stroke="#5a5f66" stroke-width="0.3" text-anchor="end">3</text>
<text x="914.8" y="1084.4" font-size="11.6" fill="#161616" stroke="#161616" stroke-width="0.3" text-anchor="start">Vendor CCC</text>
<text x="1358.8" y="1085.8" font-size="12.5" fill="#222" stroke="#222" stroke-width="0.3" text-anchor="end">5</text>
<rect x="1376.90" y="1071.30" width="18.20" height="18.95" fill="#cde2f5"/>
<text x="1403.4" y="1084.8" font-size="12.5" fill="#161616" stroke="#161616" stroke-width="0.3" text-anchor="start" textLength="75.0" lengthAdjust="spacingAndGlyphs">1,134,456.78</text>
<text x="890.0" y="1107.6" font-size="12.5" fill="#5a5f66" stroke="#5a5f66" stroke-width="0.3" text-anchor="end">4</text>
<text x="914.8" y="1104.8" font-size="11.6" fill="#161616" stroke="#161616" stroke-width="0.3" text-anchor="start">Vendor DDD</text>
<text x="1358.8" y="1107.5" font-size="12.5" fill="#222" stroke="#222" stroke-width="0.3" text-anchor="end">1</text>
<rect x="1376.90" y="1092.95" width="17.20" height="18.95" fill="#cfe3f6"/>
<text x="1401.7" y="1108.2" font-size="12.5" fill="#161616" stroke="#161616" stroke-width="0.3" text-anchor="start" textLength="75.0" lengthAdjust="spacingAndGlyphs">1,014,456.78</text>
<text x="890.0" y="1129.2" font-size="12.5" fill="#5a5f66" stroke="#5a5f66" stroke-width="0.3" text-anchor="end">5</text>
<text x="914.8" y="1126.0" font-size="11.6" fill="#161616" stroke="#161616" stroke-width="0.3" text-anchor="start">Vendor EEE</text>
<text x="1358.8" y="1129.1" font-size="12.5" fill="#222" stroke="#222" stroke-width="0.3" text-anchor="end">4</text>
<rect x="1376.90" y="1114.60" width="16.00" height="18.95" fill="#d1e4f6"/>
<text x="1399.1" y="1129.0" font-size="12.5" fill="#161616" stroke="#161616" stroke-width="0.3" text-anchor="start" textLength="64.5" lengthAdjust="spacingAndGlyphs">834,456.78</text>
<text x="890.0" y="1150.8" font-size="12.5" fill="#5a5f66" stroke="#5a5f66" stroke-width="0.3" text-anchor="end">6</text>
<text x="914.8" y="1150.0" font-size="11.6" fill="#161616" stroke="#161616" stroke-width="0.3" text-anchor="start">Vendor FFF</text>
<text x="1358.8" y="1150.8" font-size="12.5" fill="#222" stroke="#222" stroke-width="0.3" text-anchor="end">1</text>
<rect x="1376.90" y="1136.25" width="15.00" height="18.95" fill="#d3e6f7"/>
<text x="1398.6" y="1147.9" font-size="12.5" fill="#161616" stroke="#161616" stroke-width="0.3" text-anchor="start" textLength="64.5" lengthAdjust="spacingAndGlyphs">734,456.78</text>
<text x="890.0" y="1172.4" font-size="12.5" fill="#5a5f66" stroke="#5a5f66" stroke-width="0.3" text-anchor="end">7</text>
<text x="914.8" y="1170.0" font-size="11.6" fill="#161616" stroke="#161616" stroke-width="0.3" text-anchor="start">Vendor GGG</text>
<text x="1358.8" y="1172.4" font-size="12.5" fill="#222" stroke="#222" stroke-width="0.3" text-anchor="end">1</text>
<rect x="1376.90" y="1157.90" width="13.80" height="18.95" fill="#d5e7f7"/>
<text x="1396.6" y="1172.6" font-size="12.5" fill="#161616" stroke="#161616" stroke-width="0.3" text-anchor="start" textLength="64.5" lengthAdjust="spacingAndGlyphs">634,456.78</text>
<text x="890.0" y="1194.0" font-size="12.5" fill="#5a5f66" stroke="#5a5f66" stroke-width="0.3" text-anchor="end">8</text>
<text x="914.8" y="1192.0" font-size="11.6" fill="#161616" stroke="#161616" stroke-width="0.3" text-anchor="start">Vendor HHH</text>
<text x="1358.8" y="1194.0" font-size="12.5" fill="#222" stroke="#222" stroke-width="0.3" text-anchor="end">3</text>
<rect x="1376.90" y="1179.55" width="13.90" height="18.95" fill="#d7e8f8"/>
<text x="1393.9" y="1193.4" font-size="12.5" fill="#161616" stroke="#161616" stroke-width="0.3" text-anchor="start" textLength="64.5" lengthAdjust="spacingAndGlyphs">534,456.78</text>
<text x="890.0" y="1215.6" font-size="12.5" fill="#5a5f66" stroke="#5a5f66" stroke-width="0.3" text-anchor="end">9</text>
<text x="914.8" y="1215.0" font-size="11.6" fill="#161616" stroke="#161616" stroke-width="0.3" text-anchor="start">Vendor III</text>
<text x="1358.8" y="1215.7" font-size="12.5" fill="#222" stroke="#222" stroke-width="0.3" text-anchor="end">1</text>
<rect x="1376.90" y="1201.20" width="11.10" height="18.95" fill="#d4e6f8"/>
<text x="1392.6" y="1216.1" font-size="12.5" fill="#161616" stroke="#161616" stroke-width="0.3" text-anchor="start" textLength="64.5" lengthAdjust="spacingAndGlyphs">434,456.78</text>
<text x="890.0" y="1237.2" font-size="12.5" fill="#5a5f66" stroke="#5a5f66" stroke-width="0.3" text-anchor="end">10</text>
<text x="914.8" y="1235.6" font-size="11.6" fill="#161616" stroke="#161616" stroke-width="0.3" text-anchor="start">Vendor JJJ</text>
<text x="1358.8" y="1237.3" font-size="12.5" fill="#222" stroke="#222" stroke-width="0.3" text-anchor="end">2</text>
<rect x="1376.90" y="1222.85" width="9.10" height="18.95" fill="#dcebf9"/>
<text x="1391.7" y="1237.9" font-size="12.5" fill="#161616" stroke="#161616" stroke-width="0.3" text-anchor="start" textLength="64.5" lengthAdjust="spacingAndGlyphs">334,456.78</text>
<text x="890.0" y="1258.8" font-size="12.5" fill="#5a5f66" stroke="#5a5f66" stroke-width="0.3" text-anchor="end">11</text>
<text x="914.8" y="1256.4" font-size="11.6" fill="#161616" stroke="#161616" stroke-width="0.3" text-anchor="start">Vendor KKK</text>
<text x="1358.8" y="1259.0" font-size="12.5" fill="#222" stroke="#222" stroke-width="0.3" text-anchor="end">40</text>
<rect x="1376.90" y="1244.50" width="7.80" height="18.95" fill="#dfedfa"/>
<text x="1390.4" y="1255.5" font-size="12.5" fill="#161616" stroke="#161616" stroke-width="0.3" text-anchor="start" textLength="64.5" lengthAdjust="spacingAndGlyphs">234,456.78</text>
<text x="890.0" y="1280.4" font-size="12.5" fill="#5a5f66" stroke="#5a5f66" stroke-width="0.3" text-anchor="end">12</text>
<text x="914.8" y="1279.0" font-size="11.6" fill="#161616" stroke="#161616" stroke-width="0.3" text-anchor="start">Vendor LLL</text>
<text x="1358.8" y="1280.7" font-size="12.5" fill="#222" stroke="#222" stroke-width="0.3" text-anchor="end">1</text>
<rect x="1376.90" y="1266.15" width="7.10" height="18.95" fill="#e5f0fb"/>
<text x="1390.8" y="1280.2" font-size="12.5" fill="#161616" stroke="#161616" stroke-width="0.3" text-anchor="start" textLength="64.5" lengthAdjust="spacingAndGlyphs">134,456.78</text>
<text x="890.0" y="1302.0" font-size="12.5" fill="#5a5f66" stroke="#5a5f66" stroke-width="0.3" text-anchor="end">13</text>
<text x="914.8" y="1300.0" font-size="11.6" fill="#161616" stroke="#161616" stroke-width="0.3" text-anchor="start">Vendor MMM</text>
<text x="1358.8" y="1302.3" font-size="12.5" fill="#222" stroke="#222" stroke-width="0.3" text-anchor="end">1</text>
<rect x="1376.90" y="1287.80" width="6.90" height="18.95" fill="#e3effb"/>
<text x="1391.7" y="1303.3" font-size="12.5" fill="#161616" stroke="#161616" stroke-width="0.3" text-anchor="start" textLength="57.5" lengthAdjust="spacingAndGlyphs">84,456.78</text>
<text x="890.0" y="1323.6" font-size="12.5" fill="#5a5f66" stroke="#5a5f66" stroke-width="0.3" text-anchor="end">14</text>
<text x="914.8" y="1321.0" font-size="11.6" fill="#161616" stroke="#161616" stroke-width="0.3" text-anchor="start">Vendor NNN</text>
<text x="1358.8" y="1324.0" font-size="12.5" fill="#222" stroke="#222" stroke-width="0.3" text-anchor="end">2</text>
<rect x="1376.90" y="1309.45" width="6.90" height="18.95" fill="#e8f2fc"/>
<text x="1388.4" y="1322.7" font-size="12.5" fill="#161616" stroke="#161616" stroke-width="0.3" text-anchor="start" textLength="57.5" lengthAdjust="spacingAndGlyphs">60,456.78</text>
<text x="890.0" y="1345.2" font-size="12.5" fill="#5a5f66" stroke="#5a5f66" stroke-width="0.3" text-anchor="end">15</text>
<text x="914.8" y="1342.0" font-size="11.6" fill="#161616" stroke="#161616" stroke-width="0.3" text-anchor="start">Vendor OOO</text>
<text x="1358.8" y="1345.6" font-size="12.5" fill="#222" stroke="#222" stroke-width="0.3" text-anchor="end">3</text>
<rect x="1376.90" y="1331.10" width="5.90" height="18.95" fill="#e6f1fc"/>
<text x="1388.4" y="1344.5" font-size="12.5" fill="#161616" stroke="#161616" stroke-width="0.3" text-anchor="start" textLength="57.5" lengthAdjust="spacingAndGlyphs">34,456.78</text>
</svg>
</body></html>
